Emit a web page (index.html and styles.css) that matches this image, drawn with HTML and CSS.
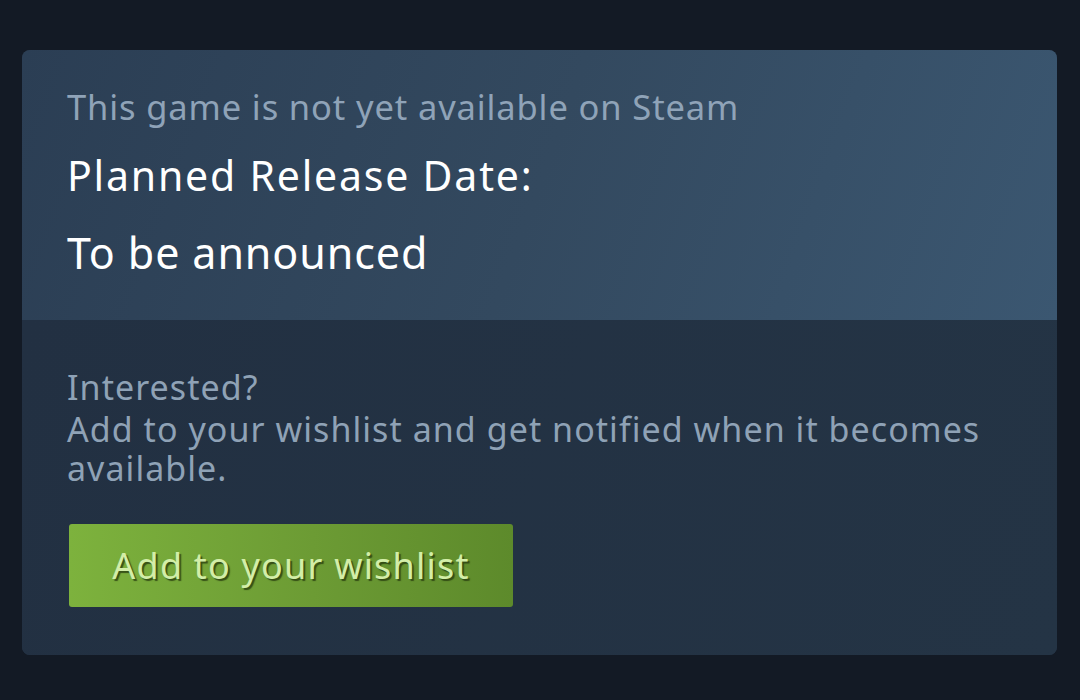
FILE: index.html
```html
<!DOCTYPE html>
<html>
<head>
<meta charset="utf-8">
<link rel="stylesheet" href="styles.css">
</head>
<body>
<div class="card">
  <div class="top">
    <div class="notice">This game is not yet available on Steam</div>
    <div class="label">Planned Release Date:</div>
    <div class="date">To be announced</div>
  </div>
  <div class="bottom">
    <div class="interest">
      <div class="q">Interested?</div>
      <div>Add to your wishlist and get notified when it becomes available.</div>
    </div>
    <button class="wish">Add to your wishlist</button>
  </div>
</div>
</body>
</html>
```
FILE: styles.css
```css
html, body {
  margin: 0;
  padding: 0;
}
body {
  background: #131a25;
  width: 1080px;
  height: 700px;
  font-family: "Noto Sans", "Open Sans", sans-serif;
  padding: 50px 23px 0 22px;
  box-sizing: border-box;
}
.card {
  width: 1035px;
  height: 605px;
  border-radius: 8px;
  overflow: hidden;
  display: flex;
  flex-direction: column;
  background: #243244;
}
.top {
  height: 270px;
  box-sizing: border-box;
  padding: 32px 45px 0 45px;
  background: linear-gradient(110deg, #2b3e54 0%, #33495f 50%, #3b5771 100%);
}
.notice {
  color: #8fa3b8;
  font-size: 34.5px;
  letter-spacing: 0.87px;
  line-height: 50px;
}
.label {
  color: #ffffff;
  font-size: 41px;
  letter-spacing: 1.8px;
  line-height: 52px;
  margin-top: 17px;
}
.date {
  color: #ffffff;
  font-size: 43px;
  letter-spacing: 0.9px;
  line-height: 56px;
  margin-top: 24px;
}
.bottom {
  flex: 1;
  padding: 48px 45px 0 45px;
  background: linear-gradient(110deg, #223042 0%, #243445 100%);
}
.interest {
  color: #8fa2b6;
  font-size: 34px;
  letter-spacing: 1.05px;
  line-height: 39px;
  width: 960px;
}
.q {
  margin-bottom: 3px;
}
.wish {
  display: block;
  margin-top: 36px;
  margin-left: 2px;
  width: 444px;
  height: 83px;
  border: none;
  border-radius: 3px;
  background: linear-gradient(90deg, #7db23d 0%, #6c9b34 55%, #5d8a2b 100%);
  color: #d3eea8;
  font-family: "Noto Sans", "Open Sans", sans-serif;
  font-size: 36px;
  letter-spacing: 1.2px;
  text-shadow: 2px 2px 1px rgba(40, 60, 15, 0.8);
  padding: 0;
}
```
